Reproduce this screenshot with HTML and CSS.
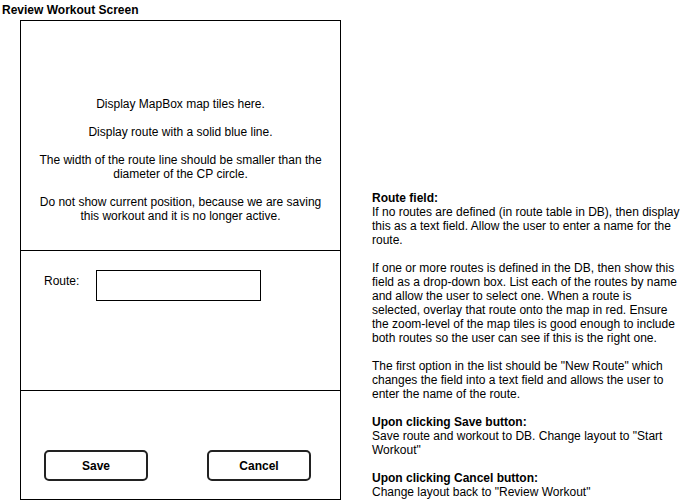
FILE: index.html
```html
<!DOCTYPE html>
<html>
<head>
<meta charset="utf-8">
<link rel="stylesheet" href="styles.css">
</head>
<body>
<div class="title">Review Workout Screen</div>
<div class="layout">
  <div class="phone">
    <div class="map">
      <p>Display MapBox map tiles here.</p>
      <p>Display route with a solid blue line.</p>
      <p>The width of the route line should be smaller than the diameter of the CP circle.</p>
      <p>Do not show current position, because we are saving this workout and it is no longer active.</p>
    </div>
    <div class="route">
      <span class="route-label">Route:</span>
      <div class="route-input"></div>
    </div>
    <div class="actions">
      <div class="btn">Save</div>
      <div class="btn">Cancel</div>
    </div>
  </div>
  <div class="notes">
    <p><b>Route field:</b><br>If no routes are defined (in route table in DB), then display this as a text field. Allow the user to enter a name for the route.</p>
    <p>If one or more routes is defined in the DB, then show this field as a drop-down box. List each of the routes by name and allow the user to select one. When a route is selected, overlay that route onto the map in red. Ensure the zoom-level of the map tiles is good enough to include both routes so the user can see if this is the right one.</p>
    <p>The first option in the list should be "New Route" which changes the field into a text field and allows the user to enter the name of the route.</p>
    <p><b>Upon clicking Save button:</b><br>Save route and workout to DB. Change layout to "Start Workout"</p>
    <p><b>Upon clicking Cancel button:</b><br>Change layout back to "Review Workout"</p>
  </div>
</div>
</body>
</html>
```
FILE: styles.css
```css
html, body {
  margin: 0;
  padding: 0;
  background: #fff;
  color: #000;
  font-family: "Liberation Sans", Arial, sans-serif;
  font-size: 12px;
  line-height: 14px;
}
.title {
  font-weight: bold;
  font-size: 12px;
  line-height: 20px;
  height: 20px;
  padding-left: 2px;
}
.layout {
  display: flex;
  align-items: flex-start;
}
.phone {
  margin-left: 20px;
  width: 319px;
  height: 478px;
  border: 1px solid #000;
  display: flex;
  flex-direction: column;
}
.map {
  height: 230px;
  flex: none;
  border-bottom: 1px solid #000;
  padding: 76px 14px 0;
  box-sizing: border-box;
  text-align: center;
}
.map p, .notes p {
  margin: 0 0 14px;
}
.route {
  height: 140px;
  flex: none;
  border-bottom: 1px solid #000;
  box-sizing: border-box;
  display: flex;
  align-items: flex-start;
  padding: 19px 0 0 23px;
}
.route-label {
  width: 52px;
  line-height: 22px;
}
.route-input {
  width: 163px;
  height: 29px;
  border: 1px solid #000;
}
.actions {
  flex: 1;
  display: flex;
  align-items: flex-start;
  padding: 59px 0 0 23px;
  gap: 59px;
}
.btn {
  width: 100px;
  height: 27px;
  border: 2px solid #222;
  border-radius: 5px;
  display: flex;
  align-items: center;
  justify-content: center;
  font-weight: bold;
  font-size: 12px;
}
.notes {
  margin-left: 31px;
  margin-top: 171px;
  width: 309px;
}
.notes p:last-child {
  margin-bottom: 0;
}
```
